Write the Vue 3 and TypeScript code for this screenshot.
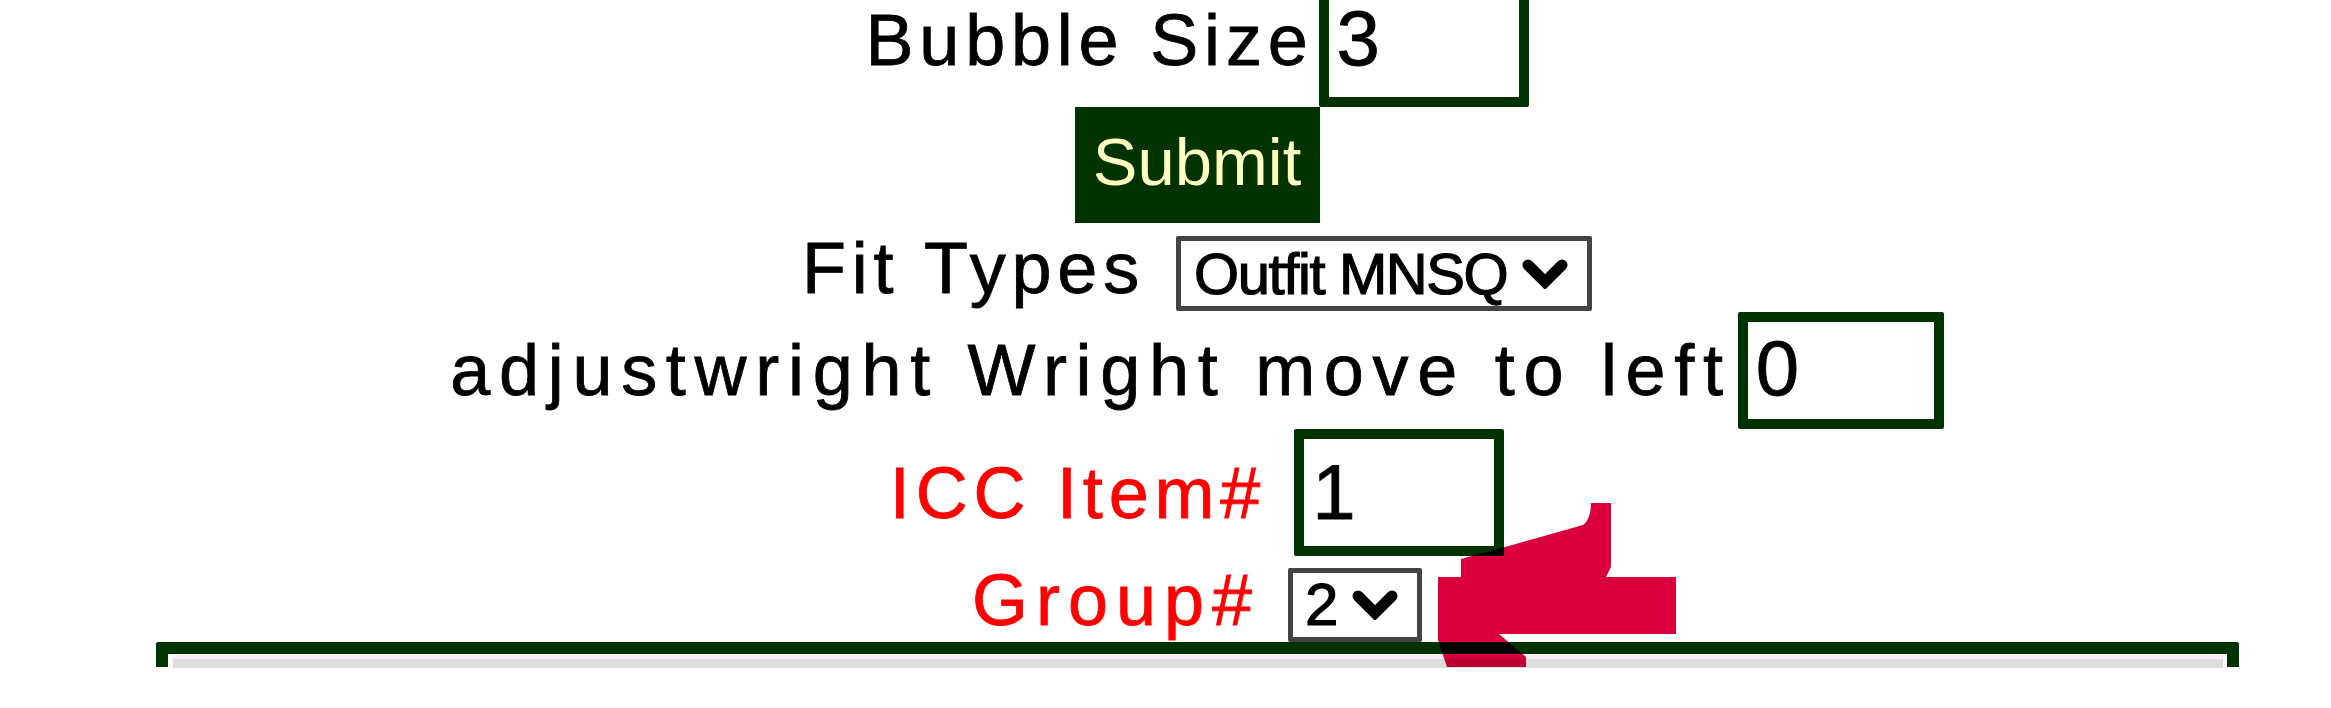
<script setup lang="ts">
import { ref } from 'vue';

const bubbleSize = ref('3');
const wrightShift = ref('0');
const iccItem = ref('1');
</script>

<template>
  <div class="page">
    <div class="row row-bubble">
      <label class="label">Bubble Size</label>
      <input v-model="bubbleSize" class="field field-bubble" type="text" />
    </div>

    <div class="row row-submit">
      <button class="submit" type="button">Submit</button>
    </div>

    <div class="row row-fit">
      <label class="label">Fit Types</label>
      <div class="picker picker-fit">
        <span>Outfit MNSQ</span>
        <svg class="chevron" viewBox="0 0 46 30"><path d="M6 6 L23 23 L40 6" /></svg>
      </div>
    </div>

    <div class="row row-wright">
      <label class="label">adjustwright Wright move to left</label>
      <input v-model="wrightShift" class="field field-wright" type="text" />
    </div>

    <div class="row row-icc">
      <label class="label red">ICC Item#</label>
      <input v-model="iccItem" class="field field-icc" type="text" />
    </div>

    <div class="row row-group">
      <label class="label red">Group#</label>
      <div class="picker picker-group">
        <span>2</span>
        <svg class="chevron" viewBox="0 0 46 30"><path d="M6 6 L23 23 L40 6" /></svg>
      </div>
    </div>

    <div class="panel">
      <div class="panel-strip"></div>
    </div>

    <!-- hand drawn marker on top of the screenshot -->
    <svg class="marker" viewBox="0 0 240 166" width="240" height="166">
      <path d="M153 2 L173 2 L173 66 L168 76 L238 76 L238 133 L61 133 L88 156 L88 166 L9 166 L0 139 L0 76 L23 76 L23 58 L67 46 L145 24 Q153 18 153 2 Z" />
    </svg>
  </div>
</template>

<style>
html,
body {
  margin: 0;
  background: #fff;
  overflow: hidden;
}
</style>

<style scoped>
.page {
  position: relative;
  box-sizing: border-box;
  width: 2331px;
  height: 708px;
  padding-left: 63px;
  overflow: hidden;
  background: #fff;
  display: flex;
  flex-direction: column;
  align-items: center;
  font-family: "Liberation Sans", Arial, sans-serif;
  color: #000;
  filter: blur(0.7px);
}

.row {
  display: flex;
  align-items: center;
  flex: none;
}

.row-bubble {
  margin-top: -20px;
  height: 127px;
}

.row-submit {
  height: 116px;
}

.row-fit {
  margin-top: 13px;
  height: 75px;
}

.row-wright {
  margin-top: 1px;
  height: 117px;
}

.row-icc {
  height: 127px;
}

.row-group {
  margin-top: 12px;
  height: 74px;
}

.label {
  font-size: 72px;
  letter-spacing: 5.8px;
  line-height: 1;
  white-space: nowrap;
  -webkit-text-stroke: 0.8px currentColor;
}

.red {
  color: #f00;
}

.row-bubble .label {
  margin-right: 5px;
  padding-bottom: 7px;
}

.row-fit .label {
  margin-right: 31px;
  padding-bottom: 11px;
}

.row-wright .label {
  margin-right: 6px;
  padding-bottom: 1px;
  letter-spacing: 8.7px;
}

.row-icc .label {
  margin-right: 28px;
}

.row-group .label {
  margin-right: 28px;
  padding-bottom: 10px;
  letter-spacing: 8px;
}

.field {
  box-sizing: border-box;
  height: 127px;
  width: 210px;
  border: 10px solid #003300;
  border-radius: 2px;
  padding: 0 8px;
  background: #fff;
  font-family: inherit;
  font-size: 78px;
  color: #000;
  outline: none;
  -webkit-text-stroke: 0.8px #000;
}

.field-bubble {
  padding-bottom: 11px;
}

.field-wright {
  width: 206px;
  height: 117px;
  padding-bottom: 5px;
}

.submit {
  box-sizing: border-box;
  width: 245px;
  height: 116px;
  padding: 0 0 8px;
  border: none;
  background: #003300;
  color: #ffffc0;
  font-family: inherit;
  font-size: 67px;
}

.picker {
  box-sizing: border-box;
  display: flex;
  align-items: center;
  border: 5px solid #444;
  border-radius: 2px;
  background: #fff;
  font-size: 58px;
  line-height: 1;
  white-space: nowrap;
}

.picker span {
  -webkit-text-stroke: 1.2px #000;
}

.picker-fit {
  width: 416px;
  height: 75px;
  padding-left: 13px;
  letter-spacing: -1.4px;
}

.picker-group {
  width: 134px;
  height: 74px;
  padding-left: 12px;
  font-size: 60px;
}

.chevron {
  width: 46px;
  height: 30px;
  fill: none;
  stroke: #000;
  stroke-width: 11;
  stroke-linejoin: miter;
  stroke-linecap: round;
}

.picker-fit .chevron {
  margin-left: 15px;
}

.picker-group .chevron {
  margin-left: 14px;
}

.panel {
  box-sizing: border-box;
  width: 2083px;
  height: 25px;
  flex: none;
  border: 12px solid #003300;
  border-bottom: none;
  border-radius: 3px 3px 0 0;
  padding: 0 4px 0 5px;
}

.panel-strip {
  box-sizing: border-box;
  height: 13px;
  margin-top: 1px;
  border-top: 4px solid #fbeefb;
  background: #dddddd;
}

.marker {
  position: absolute;
  left: 1438px;
  top: 501px;
  mix-blend-mode: multiply;
}

.marker path {
  fill: #d9003c;
}
</style>
